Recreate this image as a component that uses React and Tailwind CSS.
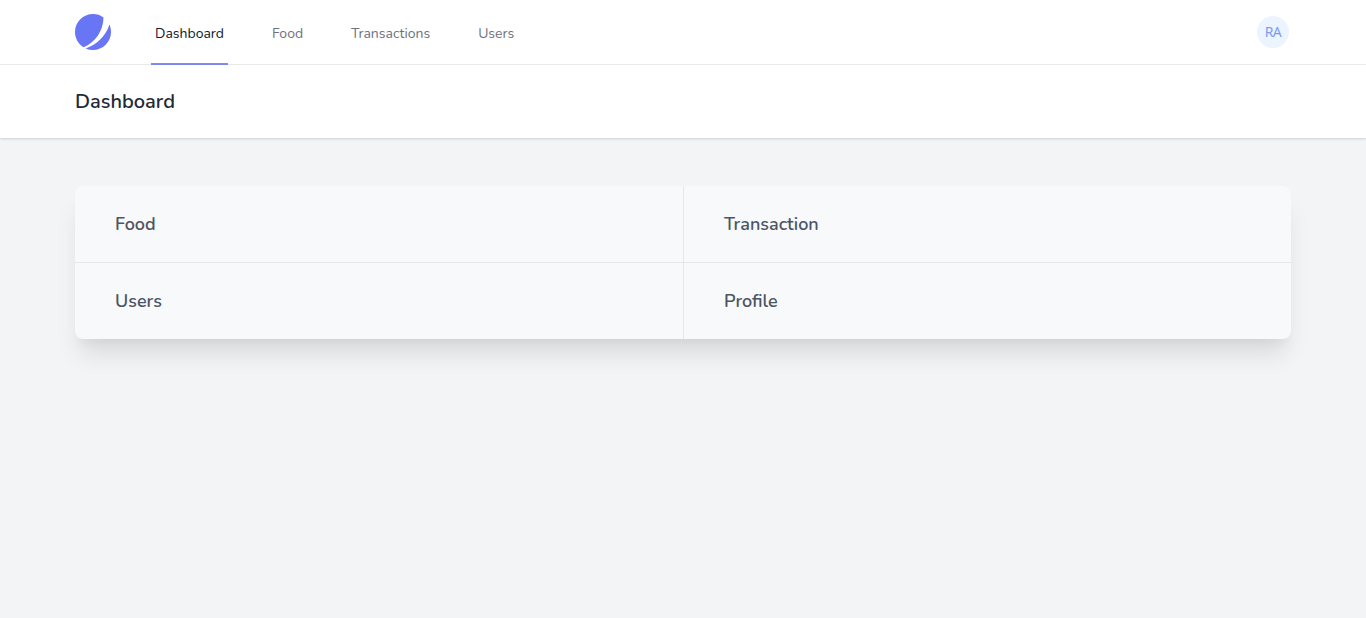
const links = [
  { label: 'Dashboard', active: true },
  { label: 'Food' },
  { label: 'Transactions' },
  { label: 'Users' },
];

const cards = [
  { label: 'Food', edge: '' },
  { label: 'Transaction', edge: 'border-l' },
  { label: 'Users', edge: 'border-t' },
  { label: 'Profile', edge: 'border-t border-l' },
];

function LogoMark() {
  return (
    <svg className="block size-9" viewBox="0 0 48 48" fill="none" aria-hidden="true">
      <path d="M11.395 44.428C4.557 40.198 0 32.632 0 24 0 10.745 10.745 0 24 0a23.891 23.891 0 0113.997 4.502c-.2 17.907-11.097 33.245-26.602 39.926z" fill="#6875F5" />
      <path d="M14.134 45.885A23.914 23.914 0 0024 48c13.255 0 24-10.745 24-24 0-3.516-.756-6.856-2.115-9.866-4.659 15.143-16.608 27.092-31.75 31.751z" fill="#6875F5" />
    </svg>
  );
}

export default function App() {
  return (
    <div className="min-h-screen bg-[#f3f4f6] font-['Nunito','Open_Sans',sans-serif]">
      <nav className="border-b border-[#eeeef0] bg-white">
        <div className="mx-auto flex h-16 max-w-7xl items-center justify-between px-8">
          <div className="flex h-16 items-center gap-10">
            <LogoMark />
            <div className="-mb-px flex h-[65px] gap-10">
              {links.map((l) => (
                <a
                  key={l.label}
                  href="#"
                  className={`flex items-center border-b-2 px-1 pt-1 text-sm leading-5 whitespace-nowrap ${l.active ? 'border-[#7f8cf5] text-[#111827]' : 'border-transparent text-[#6b7280]'}`}
                >
                  {l.label}
                </a>
              ))}
            </div>
          </div>
          <button className="mr-0.5 flex size-8 items-center justify-center rounded-full bg-[#ebf4ff] font-['Noto_Sans','Open_Sans',sans-serif] text-sm leading-4 tracking-[-0.6px] text-[#7f9cf5]">
            RA
          </button>
        </div>
      </nav>
      <header className="relative bg-white shadow-[0_1px_3px_0_rgba(0,0,0,0.1),0_1px_2px_0_rgba(0,0,0,0.06)]">
        <div className="mx-auto max-w-7xl px-8 py-6">
          <h2 className="text-xl leading-tight font-semibold text-[#1f2937]">Dashboard</h2>
        </div>
      </header>
      <main className="mx-auto max-w-7xl px-8 py-12">
        <div className="grid grid-cols-2 overflow-hidden rounded-lg bg-[#f8f9fb] shadow-[0_20px_25px_-5px_rgba(0,0,0,0.1),0_10px_10px_-5px_rgba(0,0,0,0.04)]">
          {cards.map((c) => (
            <div key={c.label} className={`border-[#e5e7eb] p-6 ${c.edge}`}>
              <a href="#" className="ml-4 block text-lg leading-7 font-semibold text-[#4b5563]">{c.label}</a>
            </div>
          ))}
        </div>
      </main>
    </div>
  );
}
